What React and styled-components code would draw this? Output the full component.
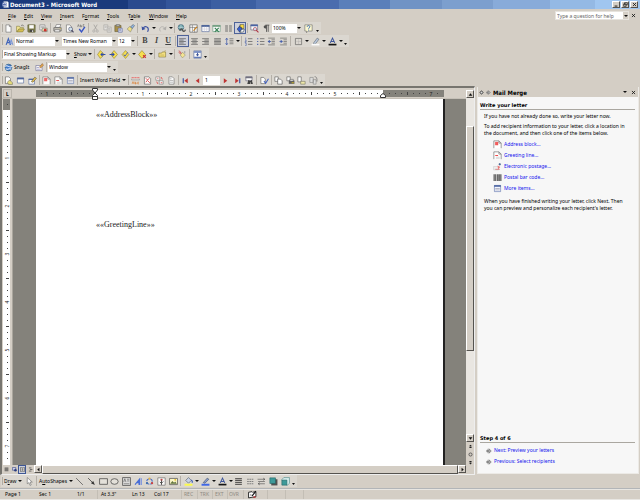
import React from 'react';
import styled, { createGlobalStyle, css } from 'styled-components';

const ui = `'Noto Sans', 'Liberation Sans', sans-serif`;
const strong = `'DejaVu Sans', sans-serif`;
const caption = `'DejaVu Sans Condensed', 'DejaVu Sans', sans-serif`;
const face = '#d4cec5';
const bar = '#dbd7d0';

const GlobalStyle = createGlobalStyle`
	* {
		box-sizing: border-box;
	}
	body {
		margin: 0;
		background: ${face};
		font-family: ${ui};
		font-size: 5px;
		line-height: 8px;
		color: #000;
	}
	button, input, select {
		font: inherit;
		color: inherit;
		margin: 0;
		padding: 0;
		border: 0;
		border-radius: 0;
		background: none;
		min-width: 0;
	}
	p, h1, h2 {
		margin: 0;
	}
`;

const Window = styled.div`
	height: 100vh;
	display: flex;
	flex-direction: column;
	overflow: hidden;
`;

const TitleBar = styled.header`
	flex: none;
	height: 9px;
	padding: 0 2px;
	display: flex;
	align-items: center;
	gap: 1px;
	background: linear-gradient(
		90deg,
		#1a3a7c 0 20%,
		#2a4a8e 20% 26%,
		#33559a 26% 33%,
		#3c5fa2 33% 40%,
		#4a6cae 40% 53%,
		#5a7fba 53% 61%,
		#7093c5 61% 69%,
		#7c9fce 69% 77%,
		#88abd9 77% 86%,
		#94b9e4 86% 93%,
		#a0c6f0 93%
	);
`;

const Title = styled.h1`
	flex: 1;
	font-family: ${caption};
	font-size: 6px;
	line-height: 9px;
	font-weight: bold;
	color: #fff;
`;

const raised = css`
	background: ${face};
	border: 1px solid;
	border-color: #fff #55534f #55534f #fff;
`;

const CaptionButton = styled.button`
	${raised}
	width: 8px;
	height: 7px;
	display: flex;
	align-items: center;
	justify-content: center;
`;

const MenuRow = styled.nav`
	flex: none;
	height: 13px;
	padding: 0 4px 0 3px;
	display: flex;
	align-items: center;
`;

const MenuItem = styled.button`
	width: ${({ $width }) => $width}px;
	text-align: left;
	white-space: nowrap;
	padding-left: 5px;
`;

const Question = styled.div`
	margin-left: auto;
	margin-right: 2px;
	display: flex;
	align-items: center;
	width: 74px;
	height: 9px;
	background: #fff;
	border: 1px solid #e6e3de;

	input {
		flex: 1;
		padding-left: 1px;
	}
	input::placeholder {
		color: #666;
		opacity: 1;
	}
	button {
		width: 5px;
		height: 7px;
		background: ${face};
	}
`;

const ToolRow = styled.div`
	flex: none;
	height: ${({ $tall }) => ($tall ? 12 : 13)}px;
	display: flex;
	align-items: flex-start;
`;

const Toolbar = styled.div`
	height: 12px;
	padding: 0 2px 0 3px;
	display: flex;
	align-items: center;
	background: ${bar};
	border-left: 1px solid ${face};
	position: relative;

	&::before {
		content: '';
		width: 1px;
		height: 8px;
		margin: 0 0 0 -2px;
		background: #b1aca3;
	}
`;

const Group = styled.div`
	display: flex;
	height: 12px;
	width: ${({ $width }) => $width}px;
`;

const ToolButton = styled.button`
	flex: 1;
	height: 12px;
	display: flex;
	align-items: center;
	justify-content: center;
	opacity: ${({ $dim }) => ($dim ? 0.5 : 0.9)};
	${({ $pressed }) => $pressed && 'background: #ccd0dd; outline: 1px solid #3f5794; outline-offset: -1px;'}
`;

const TextButton = styled.button`
	height: 12px;
	width: ${({ $width }) => $width}px;
	padding-left: ${({ $pad = 1 }) => $pad}px;
	display: flex;
	align-items: center;
	gap: 1px;
	white-space: nowrap;
`;

const Split = styled.span`
	width: 1px;
	height: 10px;
	margin: 0 1px;
	background: #b5b0a8;
`;

const DropButton = styled.button`
	width: 5px;
	height: 12px;
	display: flex;
	align-items: center;
	justify-content: center;
`;

const Caret = styled.span`
	width: 4px;
	height: 2px;
	border: 2px solid transparent;
	border-top-color: #111;
	border-bottom: 0;
	margin: 0 auto;
	display: block;
`;

const Overflow = styled.button`
	width: 4px;
	height: 12px;
	display: flex;
	align-items: flex-end;
	padding: 0 0 2px 1px;
`;

const ComboBox = styled.label`
	position: relative;
	width: ${({ $width }) => $width}px;
	height: 9px;
	margin-left: ${({ $gap = 0 }) => $gap}px;
	background: #fff;
	display: flex;
	align-items: center;

	select {
		appearance: none;
		width: 100%;
		height: 9px;
		padding: 0 6px 0 1px;
	}
	span {
		position: absolute;
		right: 0;
		top: 0;
		width: 5px;
		height: 9px;
		background: ${bar};
		display: flex;
		align-items: center;
	}
	i {
		border: 2px solid transparent;
		border-top-color: #111;
		border-bottom: 0;
	}
`;

const RecordBox = styled.input`
	width: 17px;
	height: 9px;
	padding-left: 2px;
	background: #fff;
`;

const Workspace = styled.main`
	flex: 1;
	min-height: 0;
	display: flex;
`;

const DocumentFrame = styled.section`
	flex: 1;
	min-width: 0;
	display: flex;
	border: 1px solid #77756f;
	border-width: 2px 1px 1px 2px;
	border-bottom-color: #eee;
	border-right-color: #eee;
`;

const Editor = styled.div`
	flex: 1;
	min-width: 0;
	display: flex;
	flex-direction: column;
`;

const RulerRow = styled.div`
	flex: none;
	height: 11px;
	display: flex;
	padding: 2px 22px 2px 1px;
	border-bottom: 1px solid #c5c0b7;
`;

const TabKind = styled.button`
	width: 9px;
	height: 9px;
	margin: -1px 24px 0 0;
	border: 1px solid #bbb6ad;
	font-weight: bold;
	display: flex;
	align-items: center;
	justify-content: center;
`;

const Ruler = styled.div`
	flex: 1;
	min-width: 0;
	height: 7px;
	display: flex;
`;

const Scale = styled.div`
	display: flex;
	flex-direction: ${({ $down }) => ($down ? 'column' : 'row')};
	flex: ${({ $size }) => ($size ? 'none' : '1')};
	${({ $down, $size }) => $size && `${$down ? 'height' : 'width'}: ${$size}px;`}
	min-width: 0;
	min-height: 0;
	overflow: hidden;
	background: ${({ $outside }) => ($outside ? '#84827b' : '#fff')};
	padding: ${({ $down, $lead = 0 }) => ($down ? `${$lead}px 0 0` : `0 0 0 ${$lead}px`)};
`;

const Tick = styled.span`
	flex: none;
	width: ${({ $down }) => ($down ? 8 : 6)}px;
	height: ${({ $down }) => ($down ? 6 : 7)}px;
	display: flex;
	align-items: center;
	justify-content: center;
	font-size: 5px;
	line-height: 6px;
	color: #222;

	b {
		font-weight: normal;
		${({ $down }) => $down && 'transform: rotate(-90deg);'}
	}
	i {
		background: #444;
		width: ${({ $down, $half }) => ($half && $down ? 3 : 1)}px;
		height: ${({ $down, $half }) => ($half && !$down ? 3 : 1)}px;
	}
`;

const Marker = styled.span`
	position: relative;
	width: 0;

	svg {
		position: absolute;
		left: -3px;
		top: ${({ $top }) => $top}px;
	}
`;

const PageArea = styled.div`
	flex: 1;
	min-height: 0;
	display: flex;
`;

const SideRuler = styled.div`
	width: 11px;
	flex: none;
	padding: 0 2px 0 1px;
	display: flex;
	flex-direction: column;
	border-right: 1px solid #aaa69d;
`;

const Desk = styled.div`
	flex: 1;
	min-width: 0;
	display: flex;
	background: #84827b;
	padding: 0 21px 0 23px;
`;

const Page = styled.article`
	flex: 1;
	background: #fff;
	border: solid #222;
	border-width: 0 2px 0 0;
	padding: 11px 60px 0;
	font: 8px/10px 'Liberation Serif', serif;
	color: #222;

	p {
		min-height: 10px;
		margin-bottom: 100px;
	}
`;

const ViewRow = styled.div`
	flex: none;
	height: 9px;
	display: flex;
	background: ${face};
`;

const ViewButton = styled.button`
	width: 8px;
	height: 9px;
	display: flex;
	align-items: center;
	justify-content: center;
	${({ $pressed }) => $pressed && 'outline: 1px solid #3f5794; outline-offset: -1px; background: #ccd0dd;'}
`;

const ScrollButton = styled.button`
	${({ $flat }) => !$flat && raised}
	flex: none;
	width: 8px;
	height: 8px;
	display: flex;
	align-items: center;
	justify-content: center;
`;

const ScrollColumn = styled.div`
	width: 8px;
	flex: none;
	padding-top: 2px;
	display: flex;
	flex-direction: column;
	background: ${face};
`;

const Track = styled.div`
	flex: 1;
	display: flex;
	flex-direction: ${({ $down }) => ($down ? 'column' : 'row')};
	background: #e9e6e1;

	&::before {
		content: '';
		flex: ${({ $before }) => $before};
	}
	&::after {
		content: '';
		flex: ${({ $after }) => $after};
	}
`;

const Thumb = styled.div`
	${raised}
	flex: ${({ $part }) => $part};
`;

const Pane = styled.aside`
	flex: none;
	width: 162px;
	margin: 1px 1px 1px 2px;
	display: flex;
	flex-direction: column;
	background: #f7f7f7;
	border: 1px solid #eceae6;
	border-top: 0;
`;

const PaneHeader = styled.div`
	height: 10px;
	padding: 0 2px 0 1px;
	display: flex;
	align-items: center;
	gap: 2px;
	background: ${face};

	h2 {
		flex: 1;
		font-family: ${caption};
		font-size: 6px;
		line-height: 9px;
	}
	button {
		width: 6px;
		display: flex;
		justify-content: center;
	}
`;

const PaneBody = styled.div`
	flex: 1;
	padding: 4px 3px 0 2px;
`;

const PaneFooter = styled.div`
	padding: 0 3px 2px 2px;
`;

const Heading = styled.h2`
	font-family: ${strong};
	font-size: 5px;
	line-height: 8px;
	font-weight: bold;
	border-bottom: 1px solid #aaa7a0;
`;

const Note = styled.p`
	margin: 3px 0 0;
	padding-left: 4px;
	line-height: 7px;
	white-space: nowrap;
`;

const Links = styled.ul`
	list-style: none;
	margin: 2px 0 4px;
	padding: 0 0 0 ${({ $indent }) => $indent}px;
	line-height: 11px;

	li {
		height: 11px;
	}
	a {
		display: flex;
		align-items: center;
		gap: 2px;
		color: #1414ee;
		text-decoration: none;
	}
`;

const StatusBar = styled.footer`
	flex: none;
	height: 12px;
	display: flex;
	align-items: center;
	border-top: 1px solid #b2b5b8;
	box-shadow: inset 0 1px #e8e6e2;
	border-bottom: 1px solid #e8e6e2;
`;

const Cell = styled.span`
	width: ${({ $width }) => $width}px;
	height: 9px;
	line-height: 9px;
	padding-left: ${({ $pad = 0 }) => $pad}px;
	white-space: nowrap;
	color: ${({ $off }) => ($off ? '#8d8981' : 'inherit')};
	border-right: 1px solid ${({ $edge }) => ($edge ? '#c3beb5' : 'transparent')};
`;

// every glyph is drawn on a 16 x 16 grid
const sheet = <path d="M3.5 1.5h6l3 3v10h-9z" fill="#fff" stroke="#555" />;
const pad = '#444';

const art = {
	word: (
		<>
			<path d="M4 1h9l2 3v11H4z" fill="#fff" stroke="#9ab" />
			<path d="M1 4h9v8H1z" fill="#fff" stroke="#274b9b" />
			<path d="M2.5 6l1.5 4 1.5-4L7 10l1.5-4" fill="none" stroke="#173a94" strokeWidth="1.5" />
		</>
	),
	blank: (
		<>
			{sheet}
			<path d="M9.5 1.5v3h3" fill="none" stroke="#555" />
		</>
	),
	open: (
		<>
			<path d="M1 4h5l1 2h6v3H5l-3 5H1z" fill="#f5e58a" stroke="#77702c" />
			<path d="M5 9h10l-3 5H2z" fill="#d6bd45" stroke="#77702c" />
			<path d="M9 3c2-2 4-1 5 1" fill="none" stroke="#333" />
		</>
	),
	save: (
		<>
			<path d="M1.5 1.5h13v13h-12l-1-1z" fill="#7c7a3f" stroke="#444420" />
			<path d="M4 2h8v6H4z" fill="#fff" />
			<path d="M5 10h7v4H5z" fill="#333" />
			<path d="M9 11h2v3H9z" fill="#ddd" />
		</>
	),
	mail: (
		<>
			<path d="M1.5 1.5h9v9h-9z" fill="#fff" stroke="#666" />
			<path d="M3 4h6M3 6h6" stroke="#777" />
			<path d="M5.5 7.5h9v6h-9z" fill="#ece8b0" stroke="#555" />
			<circle cx="11" cy="11" r="2.5" fill="#c22" />
		</>
	),
	print: (
		<>
			<path d="M4 6l2-5h8l-2 5z" fill="#fff" stroke="#555" />
			<path d="M1.5 6.5h13v6h-13z" fill="#c9c5bb" stroke="#333" />
			<path d="M3 10h9v4H3z" fill="#eee" stroke="#555" />
			<path d="M12 8h2v1h-2z" fill="#db0" />
		</>
	),
	preview: (
		<>
			<path d="M2.5 1.5h6l3 3v10h-9z" fill="#fff" stroke="#555" />
			<circle cx="10" cy="9" r="3.5" fill="#cfe3ef" stroke="#335" />
			<path d="M12 11l3 4" stroke="#335" strokeWidth="2" />
		</>
	),
	spell: (
		<>
			<path d="M1 5l1.5-4L4 5M6 1v4h2V3H6M13 1h-2v4h2" fill="none" stroke="#555" />
			<path d="M4 9l4 5 6-9" fill="none" stroke="#2746c4" strokeWidth="2.5" />
		</>
	),
	cut: (
		<>
			<path d="M5 1l5 9M11 1L6 10" stroke="#666" strokeWidth="1.3" />
			<circle cx="5" cy="12.5" r="2" fill="none" stroke="#666" />
			<circle cx="11" cy="12.5" r="2" fill="none" stroke="#666" />
		</>
	),
	copy: (
		<>
			<path d="M1.5 1.5h7v9h-7z" fill="#eee" stroke="#666" />
			<path d="M7.5 5.5h7v9h-7z" fill="#eee" stroke="#666" />
			<path d="M3 4h4M3 6h3M9 8h4M9 10h4M9 12h4" stroke="#777" />
		</>
	),
	paste: (
		<>
			<path d="M1.5 2.5h11v11h-11z" fill="#a48a3c" stroke="#554a20" />
			<path d="M4 1h6v3H4z" fill="#bbb" stroke="#555" />
			<path d="M7.5 7.5h7v7h-7z" fill="#fff" stroke="#2a3f94" />
			<path d="M9 10h4M9 12h4" stroke="#2a3f94" />
		</>
	),
	painter: (
		<>
			<path d="M2 9l5-5 4 4-3 6z" fill="#f3e27c" stroke="#776" />
			<path d="M8 5l5-4 2 2-4 5z" fill="#8fb8e8" stroke="#345" />
		</>
	),
	undo: (
		<>
			<path d="M4 8c2-5 9-4 9 2 0 1-1 3-2 3" fill="none" stroke="#28419c" strokeWidth="2" />
			<path d="M1 4l1 7 6-2z" fill="#28419c" />
		</>
	),
	redo: (
		<>
			<path d="M12 8C10 3 3 4 3 10c0 1 1 3 2 3" fill="none" stroke="#888" strokeWidth="1.5" />
			<path d="M15 4l-1 7-6-2z" fill="#888" />
		</>
	),
	web: (
		<>
			<circle cx="7" cy="6" r="5" fill="#65a6a6" stroke="#246" />
			<path d="M2 6h10M7 1v10" stroke="#cde" />
			<path d="M5 12c1-4 4-4 5-1s4 3 5-1" fill="none" stroke="#444" strokeWidth="2.4" />
		</>
	),
	borders: (
		<>
			<path d="M1.5 1.5h13v13h-13z" fill="#fff" stroke="#333" />
			<path d="M1 6h14M6 2v12M10 6v9" stroke="#555" />
			<path d="M8 12l6-7" stroke="#c70" strokeWidth="2" />
		</>
	),
	table: (
		<>
			<path d="M1.5 2.5h13v11h-13z" fill="#fff" stroke="#35508e" />
			<path d="M1 2h14v3H1z" fill="#35508e" />
			<path d="M1 9h14M6 5v8M10 5v8" stroke="#ccd" />
		</>
	),
	excel: (
		<>
			<path d="M1.5 2.5h13v11h-13z" fill="#fff" stroke="#486" />
			<path d="M1 2h14v3H1z" fill="#697" />
			<path d="M5 7l7 7M12 7l-7 7" stroke="#274" strokeWidth="2" />
		</>
	),
	columns: <path d="M2 3h5M2 5h5M2 7h5M2 9h5M2 11h5M2 13h5M9 3h5M9 5h5M9 7h5M9 9h5M9 11h5M9 13h5" stroke="#555" />,
	drawing: (
		<>
			<path d="M7 1h7v7H7z" fill="#fd3" stroke="#443" />
			<path d="M2 9l5-6v3h3v6H7v3z" fill="#2450d0" stroke="#124" />
			<path d="M9 10l6-1-2 5-5 1z" fill="#fff" stroke="#234" />
		</>
	),
	docmap: (
		<>
			<path d="M1.5 1.5h12v9h-12z" fill="#fff" stroke="#446" />
			<path d="M1 1h13v3H1z" fill="#3b58a0" />
			<circle cx="9" cy="9" r="3" fill="#cde" stroke="#a23" />
			<path d="M11 11l4 4" stroke="#a23" strokeWidth="2" />
		</>
	),
	para: (
		<>
			<path d="M8 2v12M11 2v12M6 2h7" fill="none" stroke="#444" strokeWidth="1.5" />
			<path d="M8 2H6a3 3 0 000 6h2z" fill="#444" />
		</>
	),
	help: (
		<>
			<path d="M1.5 1.5h13v11h-7l-3 3v-3h-3z" fill="#fffbd0" stroke="#555" />
			<path d="M5.5 5c0-3 5-3 5 0 0 2-2.500 1.500-2.500 3.500M8 10v1.500" fill="none" stroke="#235bb0" strokeWidth="1.600" />
		</>
	),
	styles: (
		<>
			<path d="M2 14L6 3l4 11M4 10h4" fill="none" stroke="#2f57b8" strokeWidth="2" />
			<path d="M8 14l3-9 3 9M9 11h4" fill="none" stroke="#6f8fd8" strokeWidth="1.800" />
		</>
	),
	left: <path d="M2 3h12M2 5.500h8M2 8h12M2 10.500h8M2 13h12" stroke={pad} strokeWidth="1.200" />,
	center: <path d="M2 3h12M4 5.500h8M2 8h12M4 10.500h8M2 13h12" stroke={pad} strokeWidth="1.200" />,
	right: <path d="M2 3h12M6 5.500h8M2 8h12M6 10.500h8M2 13h12" stroke={pad} strokeWidth="1.200" />,
	justify: <path d="M2 3h12M2 5.500h12M2 8h12M2 10.500h12M2 13h12" stroke={pad} strokeWidth="1.200" />,
	spacing: (
		<>
			<path d="M8 3h7M8 6h7M8 9h7M8 12h7" stroke={pad} />
			<path d="M3 2v12M1 5l2-3 2 3M1 11l2 3 2-3" fill="none" stroke="#3451a8" strokeWidth="1.300" />
		</>
	),
	numbers: (
		<>
			<path d="M7 3h8M7 8h8M7 13h8" stroke={pad} strokeWidth="1.200" />
			<path d="M3 1v4M2 6h2v2H2v2h2M2 11h2v4H2" fill="none" stroke="#3451a8" />
		</>
	),
	bullets: (
		<>
			<path d="M7 3h8M7 8h8M7 13h8" stroke={pad} strokeWidth="1.200" />
			<path d="M2 2h2v2H2zM2 7h2v2H2zM2 12h2v2H2z" fill="#3451a8" />
		</>
	),
	outdent: (
		<>
			<path d="M2 2h12M8 5h6M8 8h6M8 11h6M2 14h12" stroke={pad} />
			<path d="M7 8H3" stroke="#3451a8" strokeWidth="1.500" />
			<path d="M1 8l4-3v6z" fill="#3451a8" />
		</>
	),
	indent: (
		<>
			<path d="M2 2h12M8 5h6M8 8h6M8 11h6M2 14h12" stroke={pad} />
			<path d="M1 8h3" stroke="#3451a8" strokeWidth="1.500" />
			<path d="M7 8L3 5v6z" fill="#3451a8" />
		</>
	),
	frame: (
		<>
			<path d="M2.500 2.500h11v11h-11z" fill="none" stroke="#444" />
			<path d="M8 3v10M3 8h10" stroke="#999" strokeDasharray="1 1" />
		</>
	),
	highlight: (
		<>
			<path d="M5 10l6-8 3 2-6 8-4 1z" fill="#b9c8e0" stroke="#456" />
			<path d="M1 12h14v3H1z" fill="#fff" />
		</>
	),
	fontColor: (
		<>
			<path d="M4 10.500L8 2l4 8.500M5.500 8h5" fill="none" stroke="#2b4694" strokeWidth="1.800" />
			<path d="M1 12h14v3H1z" fill="#000" />
		</>
	),
	prevChange: (
		<>
			<path d="M6 1l7 7-7 7-5-7z" fill="#f9df42" stroke="#8a7618" />
			<path d="M15 8H7M10 5L7 8l3 3" fill="none" stroke="#1f3fa8" strokeWidth="1.800" />
		</>
	),
	nextChange: (
		<>
			<path d="M9 1l6 7-6 7-6-7z" fill="#f9df42" stroke="#8a7618" />
			<path d="M1 8h8M6 5l3 3-3 3" fill="none" stroke="#1f3fa8" strokeWidth="1.800" />
		</>
	),
	accept: (
		<>
			<path d="M8 1l6 7-6 7-6-7z" fill="#f9df42" stroke="#8a7618" />
			<path d="M5 8l2 3 5-7" fill="none" stroke="#2b4cba" strokeWidth="1.500" />
		</>
	),
	reject: (
		<>
			<path d="M7 1l6 7-6 7-6-7z" fill="#f9df42" stroke="#8a7618" />
			<path d="M9 9l5 5M14 9l-5 5" stroke="#c22" strokeWidth="1.800" />
		</>
	),
	comment: (
		<>
			<path d="M1.500 5.500h5l1-2h6v9h-12z" fill="#f6e27a" stroke="#776a22" />
			<path d="M10 3l4-2M4 9h7" stroke="#aa9332" />
		</>
	),
	track: (
		<>
			<path d="M8 4l5 5-5 5-4-5z" fill="#f7e68c" stroke="#886" />
			<path d="M2 1l4 5M1 4l4 3" stroke="#c33" strokeWidth="1.500" />
			<path d="M12 2v4" stroke="#666" />
		</>
	),
	reviewPane: (
		<>
			<path d="M1.500 1.500h13v13h-13z" fill="#fff" stroke="#35508e" />
			<path d="M2 2h12v3H2zM2 12h12v2H2z" fill="#5472b8" />
			<path d="M8 5v6M5.500 8.500h5" stroke="#223f90" strokeWidth="1.600" />
		</>
	),
	snag: (
		<>
			<circle cx="8" cy="8" r="6" fill="#3f78c8" stroke="#257" />
			<path d="M2 6c4-4 8 4 12 0M3 10c3 3 7-2 10 1" fill="none" stroke="#e8f0ff" strokeWidth="1.800" />
		</>
	),
	snagProps: (
		<>
			<path d="M1.500 4.500h11v9h-11z" fill="#fff" stroke="#558" />
			<path d="M8 7l5-6 2 3-5 5z" fill="#e6a53c" stroke="#853" />
			<path d="M3 8h4M3 11h7" stroke="#66a" />
		</>
	),
	mainDoc: (
		<>
			<path d="M2.500 1.500h6l3 3v9h-9z" fill="#fff" stroke="#444" />
			<path d="M6 11l4-4 5 5v3H8z" fill="#e7dc70" stroke="#665" />
		</>
	),
	dataSource: (
		<>
			<path d="M2.500 3.500h11v9h-11z" fill="#fff" stroke="#3d5796" />
			<path d="M2 3h12v3H2z" fill="#3d5796" />
		</>
	),
	recipients: (
		<>
			<path d="M1.500 5.500h10v9h-10z" fill="#fff" stroke="#3d5796" />
			<path d="M1 5h11v2H1z" fill="#3d5796" />
			<path d="M6 10l6-8 3 2-6 7z" fill="#f2c13b" stroke="#443" />
		</>
	),
	address: (
		<>
			<path d="M1.500 14.500v-13h9l4 4v9" fill="#fff" stroke="#555" />
			<path d="M10.500 1.500v4h4" fill="none" stroke="#555" />
			<path d="M4 4h5v1H4zM4 6h5v1H4zM4 8h5v1H4z" fill="#e11" stroke="#e33" strokeWidth=".6" />
		</>
	),
	greeting: (
		<>
			<path d="M1.500 14.500v-13h9l4 4v9" fill="#fff" stroke="#555" />
			<path d="M10.500 1.500v4h4" fill="none" stroke="#555" />
			<path d="M4 8h5" stroke="#e33" strokeWidth="1.600" />
			<path d="M5 11h7M5 13h7" stroke="#bbb" />
		</>
	),
	postage: (
		<>
			<path d="M1 8h9v6H1z" fill="#eee" stroke="#ccc" />
			<path d="M8 6l5 3-4 4z" fill="#e77" />
			<path d="M12 2v4M10 4h4" stroke="#358" strokeWidth="1.600" />
			<path d="M4 13h8" stroke="#c44" />
		</>
	),
	barcode: <path d="M2 2v12M5 2v12M8.500 2v12M11 2v12M14 2v12" stroke="#333" strokeWidth="1.800" />,
	more: (
		<>
			<path d="M2.500 2.500h11v11h-11z" fill="#f3f6ff" stroke="#5068a4" />
			<path d="M2 2h12v3H2z" fill="#5068a4" />
			<path d="M4 8h8M4 10.500h8" stroke="#889" />
		</>
	),
	viewData: (
		<>
			<path d="M1 3h4M6 3h4M11 3h4" stroke="#e55" strokeWidth="1.600" />
			<path d="M1 5v2h14V5" fill="none" stroke="#888" />
			<path d="M2 14l1.500-4L5 14M7 10v4h2v-2H7M14 11h-2v3h2" fill="none" stroke="#d60" />
		</>
	),
	hiliteFields: (
		<>
			<path d="M2.500 1.500h8l3 3v10h-11z" fill="#fff" stroke="#444" />
			<path d="M5 4l3 3M9 9l3 3M11 4L5 11" stroke="#d33" strokeWidth="1.600" />
		</>
	),
	match: (
		<>
			<path d="M1.500 1.500h7v6h-7zM7.500 8.500h7v6h-7z" fill="#fff" stroke="#666" />
			<path d="M11 2l2 4M3 10l2 4M4 4h2M10 12h3" stroke="#d44" strokeWidth="1.600" />
		</>
	),
	propagate: (
		<>
			{sheet}
			<path d="M5 5h3M5 8h6M5 11h6" stroke="#888" />
		</>
	),
	first: (
		<>
			<path d="M4 4v9" stroke="#24429c" strokeWidth="2" />
			<path d="M12 4v9L6 8.500z" fill="#b22" />
		</>
	),
	previous: <path d="M11 4v9L5 8.500z" fill="#b22" />,
	next: <path d="M5 4v9l6-4.500z" fill="#b22" />,
	last: (
		<>
			<path d="M12 4v9" stroke="#24429c" strokeWidth="2" />
			<path d="M4 4v9l6-4.500z" fill="#b22" />
		</>
	),
	find: (
		<>
			<path d="M1.500 1.500h11v7h-11z" fill="#fff" stroke="#446" />
			<path d="M1 1h12v3H1z" fill="#667" />
			<path d="M6 7h2v2h2V7h2l2 7h-4v-3H9v3H4z" fill="#333" />
		</>
	),
	check: (
		<>
			<path d="M1.500 2.500h5l3 3v8h-8z" fill="#fff" stroke="#444" />
			<path d="M7 9l3 4 5-8" fill="none" stroke="#2e52bd" strokeWidth="1.800" />
		</>
	),
	toDoc: (
		<>
			<path d="M1.500 1.500h6v8h-6z" fill="#fff" stroke="#444" />
			<path d="M6.500 5.500h5l3 3v6h-8z" fill="#fff" stroke="#333" />
		</>
	),
	toPrinter: (
		<>
			<path d="M1.500 1.500h6v7h-6z" fill="#fff" stroke="#444" />
			<path d="M5 8h10v6H5z" fill="#555" />
			<path d="M7 6h6v3H7z" fill="#fff" stroke="#444" />
			<path d="M10 12h4" stroke="#db0" strokeWidth="1.500" />
		</>
	),
	toMail: (
		<>
			<path d="M1.500 1.500h6v9h-6z" fill="#fff" stroke="#444" />
			<path d="M6.500 9.500h8v5h-8z" fill="#f1eaa5" stroke="#665" />
		</>
	),
	toFax: (
		<>
			<path d="M1.500 2.500h6v9h-6zM7.500 6.500h5v8h-5z" fill="#ddd" stroke="#777" />
			<path d="M10 1c3 0 5 3 4 9" fill="none" stroke="#777" strokeWidth="1.500" />
		</>
	),
	pointer: <path d="M4 1v11l3-2 2 5 2-1-2-5h4z" fill="#fff" stroke="#555" />,
	line: <path d="M2 2l12 12" stroke="#333" strokeWidth="1.200" />,
	arrow: (
		<>
			<path d="M2 2l9 9" stroke="#222" strokeWidth="1.300" />
			<path d="M14 14L7 11l4-4z" fill="#222" />
		</>
	),
	rect: <path d="M1 3h14v10H1z" fill="#e4e1da" stroke="#333" strokeWidth="1.300" />,
	oval: <ellipse cx="8" cy="8" rx="6.500" ry="5" fill="#e4e1da" stroke="#333" strokeWidth="1.300" />,
	textBox: (
		<>
			<path d="M1 1h14v14H1z" fill="#ddd" stroke="#444" strokeWidth="1.400" />
			<path d="M3 9l2-6 2 6M9 4h4M9 7h4M3 12h10" fill="none" stroke="#444" />
		</>
	),
	wordArt: (
		<>
			<path d="M1 13L11 1v13H8v-3H5l-2 3z" fill="#3a63d8" />
			<path d="M12 2h2v12h-2z" fill="#6f8be0" />
		</>
	),
	diagram: (
		<>
			<circle cx="8" cy="8" r="5" fill="none" stroke="#3a63c8" strokeWidth="2" strokeDasharray="6 2" />
			<circle cx="8" cy="3" r="2" fill="#e8b33a" />
			<circle cx="3.500" cy="11" r="2" fill="#36a" />
			<circle cx="12.500" cy="11" r="2" fill="#c33" />
		</>
	),
	clipArt: (
		<>
			<path d="M1.500 1.500h13v13h-13z" fill="#fff" stroke="#444" />
			<circle cx="8" cy="5" r="2" fill="#b33" />
			<path d="M8 6v8M5 9l3 2 3-3" fill="none" stroke="#333" strokeWidth="1.600" />
		</>
	),
	picture: (
		<>
			<path d="M1 2.500h14v11H1z" fill="#fffbc8" stroke="#444" strokeWidth="1.300" />
			<path d="M2 12l4-5 3 3 2-2 3 4z" fill="#566b2f" />
			<circle cx="11" cy="5" r="1.500" fill="#e6b400" />
		</>
	),
	fill: (
		<>
			<path d="M3 6l5-5 5 5-5 5z" fill="#c8d3ea" stroke="#345" />
			<path d="M13 5c2 2 2 4 1 5" fill="none" stroke="#2850b8" strokeWidth="2" />
			<path d="M1 12h14v3.500H1z" fill="#ffff3c" />
		</>
	),
	lineColor: (
		<>
			<path d="M4 10l7-8 3 2-7 7z" fill="#7e97d2" stroke="#235" />
			<path d="M1 12h14v3.500H1z" fill="#2f5bea" />
		</>
	),
	lineStyle: <path d="M2 3h12M2 6h12M2 9.500h12M2 13h12" stroke="#222" strokeWidth="1.600" />,
	dashStyle: <path d="M2 4h12M2 8h12M2 12h12" stroke="#777" strokeWidth="1.800" strokeDasharray="3 1" />,
	arrowStyle: <path d="M1 4h13M11 2l3 2-3 2M2 8h12M5 10l-3 2 3 2M2 12h12" fill="none" stroke="#333" />,
	shadow: (
		<>
			<path d="M4 4h11v11H4z" fill="#444" />
			<path d="M1.500 1.500h10v10h-10z" fill="#2d9494" stroke="#155" />
		</>
	),
	cube: (
		<>
			<path d="M1 5l4-4h10v10l-4 4z" fill="#d4eff0" stroke="#377" />
			<path d="M1.500 5.500h9v9h-9z" fill="#2d9494" stroke="#155" />
		</>
	),
	book: (
		<>
			<path d="M1 4l6-1 1 1 6-1v9l-6 1-1 0-6 1z" fill="#fff" stroke="#111" strokeWidth="1.500" />
			<path d="M4 8h2M4 10h2" stroke="#555" />
			<path d="M7 11l7-9" stroke="#111" strokeWidth="2" />
			<path d="M10 11l3 3M13 11l-3 3" stroke="#c22" strokeWidth="1.500" />
		</>
	),
	close: <path d="M3 3l10 10M13 3L3 13" stroke="#111" strokeWidth="2.600" />,
	minimize: <path d="M2 13h9" stroke="#111" strokeWidth="3" />,
	restore: <path d="M5 2h9v7H5zM2 6h8v8H2z" fill="#d4cec5" stroke="#111" strokeWidth="2" />,
	star: (
		<>
			<path d="M8 1v14M1 8h14M3 3l10 10M13 3L3 13" stroke="#444" strokeWidth="1.800" />
			<circle cx="8" cy="8" r="4" fill="#ddd" stroke="#444" strokeWidth="2" />
		</>
	),
	goto: (
		<>
			<path d="M8 2l6 6-6 6V10H2V6h6z" fill="#aaa" stroke="#666" strokeWidth="1.500" />
			<path d="M5 2v12" stroke="#666" />
		</>
	),
	up: <path d="M8 4l6 8H2z" fill="#111" />,
	down: <path d="M8 12l6-8H2z" fill="#111" />,
	toLeft: <path d="M4 8l7-6v12z" fill="#111" />,
	toRight: <path d="M12 8L5 2v12z" fill="#111" />,
	doubleUp: <path d="M8 2l5 5H3zM8 8l5 5H3z" fill="#222" />,
	doubleDown: <path d="M8 8l5-5H3zM8 14l5-5H3z" fill="#222" />,
	ball: <circle cx="8" cy="8" r="5" fill="none" stroke="#444" strokeWidth="2.500" />,
	normalView: <path d="M2 3h12M2 6h12M2 9h12M2 12h12" stroke="#333" strokeWidth="2" />,
	webView: (
		<>
			<path d="M1 2h11v8H1z" fill="#dde" stroke="#2a3c80" strokeWidth="2" />
			<circle cx="11" cy="10" r="4" fill="#2a3c80" />
		</>
	),
	printView: <path d="M2 1h12v14H2zM5 5h6M5 8h6M5 11h6" fill="#fff" stroke="#444" strokeWidth="2" />,
	outlineView: <path d="M3 3h8M6 8h8M3 13h8" stroke="#333" strokeWidth="2" />,
};

const Icon = ({ name, size = 9 }) => (
	<svg width={size} height={size} viewBox="0 0 16 16" aria-hidden="true">
		{art[name]}
	</svg>
);

const Letter = styled.span`
	font: bold 8px/10px 'Liberation Serif', serif;
	color: #333;
	font-style: ${({ $italic }) => ($italic ? 'italic' : 'normal')};
	text-decoration: ${({ $under }) => ($under ? 'underline' : 'none')};
`;

const Tools = ({ width, names, dim = [], pressed }) => (
	<Group $width={width}>
		{names.map((name) => (
			<ToolButton key={name} aria-label={name} $dim={dim.includes(name)} $pressed={name === pressed}>
				<Icon name={name} />
			</ToolButton>
		))}
	</Group>
);

const Drop = () => (
	<DropButton aria-label="More choices">
		<Caret />
	</DropButton>
);

const More = () => (
	<Overflow aria-label="Toolbar options">
		<svg width="3" height="2" viewBox="0 0 3 2">
			<path d="M0 0h3L1.500 2z" fill="#111" />
		</svg>
	</Overflow>
);

const Combo = ({ label, value, width, gap }) => (
	<ComboBox $width={width} $gap={gap}>
		<select aria-label={label} defaultValue={value}>
			<option>{value}</option>
		</select>
		<span>
			<i />
		</span>
	</ComboBox>
);

// one inch is eight ticks; zero says how many ticks lie before the origin
const Ticks = ({ count, zero, down }) =>
	Array.from({ length: count }, (_, i) => {
		const at = i - zero;
		const inch = at % 8 === 0;
		return (
			<Tick key={i} $down={down} $half={Math.abs(at % 8) === 4}>
				{inch ? <b>{at === 0 ? '' : Math.abs(at / 8)}</b> : <i />}
			</Tick>
		);
	});

const menus = [
	['F', 'ile', 16, ''],
	['E', 'dit', 17, ''],
	['V', 'iew', 19, ''],
	['I', 'nsert', 22, ''],
	['o', 'rmat', 25, 'F'],
	['T', 'ools', 21, ''],
	['a', 'ble', 21, 'T'],
	['W', 'indow', 27, ''],
	['H', 'elp', 20, ''],
];

const items = [
	['address', 'Address block...'],
	['greeting', 'Greeting line...'],
	['postage', 'Electronic postage...'],
	['barcode', 'Postal bar code...'],
	['more', 'More items...'],
];

const Toolbars = () => (
	<>
		<ToolRow>
			<Toolbar>
				<Tools width={46} names={['blank', 'open', 'save', 'mail']} />
				<Split />
				<Tools width={35} names={['print', 'preview', 'spell']} />
				<Split />
				<Tools width={46} names={['cut', 'copy', 'paste', 'painter']} dim={['cut', 'copy']} />
				<Split />
				<Tools width={12} names={['undo']} />
				<Drop />
				<Tools width={12} names={['redo']} dim={['redo']} />
				<Drop />
				<Split />
				<Tools width={70} names={['web', 'borders', 'table', 'excel', 'columns', 'drawing']} pressed="drawing" />
				<Split />
				<Tools width={23} names={['docmap', 'para']} />
				<Combo label="Zoom" value="100%" width={30} />
				<Tools width={13} names={['help']} />
				<More />
			</Toolbar>
		</ToolRow>
		<ToolRow>
			<Toolbar>
				<Tools width={12} names={['styles']} />
				<Combo label="Style" value="Normal" width={45} />
				<Combo label="Font" value="Times New Roman" width={55} gap={2} />
				<Combo label="Font size" value="12" width={18} gap={1} />
				<Split />
				<Group $width={35}>
					<ToolButton aria-label="Bold">
						<Letter>B</Letter>
					</ToolButton>
					<ToolButton aria-label="Italic">
						<Letter $italic>I</Letter>
					</ToolButton>
					<ToolButton aria-label="Underline">
						<Letter $under>U</Letter>
					</ToolButton>
				</Group>
				<Split />
				<Tools width={46} names={['left', 'center', 'right', 'justify']} pressed="left" />
				<Tools width={12} names={['spacing']} />
				<Drop />
				<Split />
				<Tools width={46} names={['numbers', 'bullets', 'outdent', 'indent']} />
				<Split />
				<Tools width={12} names={['frame']} />
				<Drop />
				<Tools width={12} names={['highlight']} />
				<Drop />
				<Tools width={12} names={['fontColor']} />
				<Drop />
				<More />
			</Toolbar>
		</ToolRow>
		<ToolRow>
			<Toolbar>
				<Combo label="Display for review" value="Final Showing Markup" width={68} />
				<TextButton $width={22} $pad={3}>
					<span>
						<u>S</u>how
					</span>
					<Caret />
				</TextButton>
				<Split />
				<Tools width={35} names={['prevChange', 'nextChange', 'accept']} />
				<Drop />
				<Tools width={12} names={['reject']} />
				<Drop />
				<Split />
				<Tools width={12} names={['comment']} />
				<Drop />
				<Split />
				<Tools width={12} names={['track']} />
				<Split />
				<Tools width={12} names={['reviewPane']} />
				<More />
			</Toolbar>
		</ToolRow>
		<ToolRow>
			<Toolbar>
				<TextButton $width={30} $pad={1}>
					<Icon name="snag" />
					SnagIt
				</TextButton>
				<Tools width={12} names={['snagProps']} />
				<Split />
				<Combo label="Capture" value="Window" width={64} />
				<More />
			</Toolbar>
		</ToolRow>
		<ToolRow $tall>
			<Toolbar>
				<Tools width={35} names={['mainDoc', 'dataSource', 'recipients']} />
				<Split />
				<Tools width={35} names={['address', 'greeting', 'more']} />
				<Split />
				<TextButton $width={48}>
					Insert Word Field
					<Caret />
				</TextButton>
				<Split />
				<Tools width={47} names={['viewData', 'hiliteFields', 'match', 'propagate']} />
				<Split />
				<Tools width={23} names={['first', 'previous']} />
				<RecordBox aria-label="Go to record" defaultValue="1" />
				<Tools width={35} names={['next', 'last', 'find']} />
				<Split />
				<Tools width={12} names={['check']} />
				<Split />
				<Tools width={46} names={['toDoc', 'toPrinter', 'toMail', 'toFax']} />
				<More />
			</Toolbar>
		</ToolRow>
	</>
);

const Document = () => (
	<DocumentFrame>
		<Editor>
			<RulerRow>
				<TabKind aria-label="Tab alignment">L</TabKind>
				<Ruler>
					<Scale $size={59} $outside $lead={2}>
						<Ticks count={9} zero={9} />
					</Scale>
					<Marker $top={-2}>
						<svg width="6" height="12" viewBox="0 0 6 12">
							<path d="M.5.5h5V2L3 5 .5 2zM3 5l2.500 2.500v4h-5v-4zM.5 8.500h5" fill="#fff" stroke="#333" />
						</svg>
					</Marker>
					<Scale $size={288} $lead={3}>
						<Ticks count={47} zero={-1} />
					</Scale>
					<Marker $top={3}>
						<svg width="6" height="5" viewBox="0 0 6 5">
							<path d="M3 .5l2.500 2v2h-5v-2z" fill="#fff" stroke="#333" />
						</svg>
					</Marker>
					<Scale $outside $lead={3}>
						<Ticks count={9} zero={-49} />
					</Scale>
				</Ruler>
			</RulerRow>
			<PageArea>
				<SideRuler>
					<Scale $down $size={11} $outside $lead={2}>
						<Ticks count={1} zero={1} down />
					</Scale>
					<Scale $down $lead={3}>
						<Ticks count={58} zero={-1} down />
					</Scale>
				</SideRuler>
				<Desk>
					<Page>
						<p>««AddressBlock»»</p>
						<p>««GreetingLine»»</p>
					</Page>
				</Desk>
			</PageArea>
			<ViewRow>
				{['normalView', 'webView', 'printView', 'outlineView'].map((name) => (
					<ViewButton key={name} aria-label={name} $pressed={name === 'printView'}>
						<Icon name={name} size={5} />
					</ViewButton>
				))}
				<ScrollButton aria-label="Scroll left">
					<Icon name="toLeft" size={5} />
				</ScrollButton>
				<Track $before={0} $after={0}>
					<Thumb $part={1} />
				</Track>
				<ScrollButton aria-label="Scroll right">
					<Icon name="toRight" size={5} />
				</ScrollButton>
			</ViewRow>
		</Editor>
		<ScrollColumn>
			<ScrollButton aria-label="Scroll up">
				<Icon name="up" size={5} />
			</ScrollButton>
			<Track $down $before={28} $after={83}>
				<Thumb $part={224} />
			</Track>
			<ScrollButton aria-label="Scroll down">
				<Icon name="down" size={5} />
			</ScrollButton>
			{['doubleUp', 'ball', 'doubleDown'].map((name) => (
				<ScrollButton key={name} $flat aria-label={name}>
					<Icon name={name} size={5} />
				</ScrollButton>
			))}
			<ScrollButton as="span" $flat />
		</ScrollColumn>
	</DocumentFrame>
);

const MailMerge = () => (
	<Pane>
		<PaneHeader>
			<Icon name="star" size={5} />
			<Icon name="goto" size={5} />
			<h2>Mail Merge</h2>
			<button aria-label="Other task panes">
				<Caret />
			</button>
			<button aria-label="Close">
				<Icon name="close" size={5} />
			</button>
		</PaneHeader>
		<PaneBody>
			<Heading>Write your letter</Heading>
			<Note>If you have not already done so, write your letter now.</Note>
			<Note>
				To add recipient information to your letter, click a location in
				<br />
				the document, and then click one of the items below.
			</Note>
			<Links $indent={13}>
				{items.map(([icon, text]) => (
					<li key={icon}>
						<a href="#item">
							<Icon name={icon} />
							{text}
						</a>
					</li>
				))}
			</Links>
			<Note>
				When you have finished writing your letter, click Next. Then
				<br />
				you can preview and personalize each recipient's letter.
			</Note>
		</PaneBody>
		<PaneFooter>
			<Heading>Step 4 of 6</Heading>
			<Links $indent={6}>
				<li>
					<a href="#next">
						<Icon name="goto" size={6} />
						Next: Preview your letters
					</a>
				</li>
				<li>
					<a href="#previous">
						<Icon name="goto" size={6} />
						Previous: Select recipients
					</a>
				</li>
			</Links>
		</PaneFooter>
	</Pane>
);

const App = () => (
	<Window>
		<GlobalStyle />
		<TitleBar>
			<Icon name="word" size={7} />
			<Title>Document3 - Microsoft Word</Title>
			<CaptionButton aria-label="Minimize">
				<Icon name="minimize" size={5} />
			</CaptionButton>
			<CaptionButton aria-label="Restore">
				<Icon name="restore" size={5} />
			</CaptionButton>
			<CaptionButton aria-label="Close">
				<Icon name="close" size={5} />
			</CaptionButton>
		</TitleBar>
		<MenuRow>
			{menus.map(([key, rest, width, before]) => (
				<MenuItem key={before + key + rest} $width={width}>
					{before}
					<u>{key}</u>
					{rest}
				</MenuItem>
			))}
			<Question>
				<input aria-label="Help question" placeholder="Type a question for help" />
				<button aria-label="Recent questions">
					<Caret />
				</button>
			</Question>
			<button aria-label="Close document">
				<Icon name="close" size={5} />
			</button>
		</MenuRow>
		<Toolbars />
		<Workspace>
			<Document />
			<MailMerge />
		</Workspace>
		<ToolRow>
			<Toolbar>
				<TextButton $width={20}>
					<span>
						D<u>r</u>aw
					</span>
					<Caret />
				</TextButton>
				<Tools width={12} names={['pointer']} />
				<Split />
				<TextButton $width={36}>
					<span>
						A<u>u</u>toShapes
					</span>
					<Caret />
				</TextButton>
				<Tools
					width={105}
					names={['line', 'arrow', 'rect', 'oval', 'textBox', 'wordArt', 'diagram', 'clipArt', 'picture']}
				/>
				<Split />
				<Tools width={12} names={['fill']} />
				<Drop />
				<Tools width={12} names={['lineColor']} />
				<Drop />
				<Tools width={12} names={['fontColor']} />
				<Drop />
				<Tools width={58} names={['lineStyle', 'dashStyle', 'arrowStyle', 'shadow', 'cube']} />
				<More />
			</Toolbar>
		</ToolRow>
		<StatusBar>
			<Cell $width={38} $pad={5}>Page 1</Cell>
			<Cell $width={38} $pad={1}>Sec 1</Cell>
			<Cell $width={22} $pad={1} $edge>1/1</Cell>
			<Cell $width={33} $pad={3}>At 3.3"</Cell>
			<Cell $width={22} $pad={1}>Ln 13</Cell>
			<Cell $width={29} $pad={1} $edge>Col 17</Cell>
			<Cell $width={16} $pad={2} $off $edge>REC</Cell>
			<Cell $width={15} $pad={2} $off $edge>TRK</Cell>
			<Cell $width={15} $pad={2} $off $edge>EXT</Cell>
			<Cell $width={16} $pad={1} $off $edge>OVR</Cell>
			<Cell $width={24} $pad={4} $edge>
				<Icon name="book" />
			</Cell>
			<Cell $width={18} $edge />
			<Cell $width={18} $edge />
		</StatusBar>
	</Window>
);

export default App;
